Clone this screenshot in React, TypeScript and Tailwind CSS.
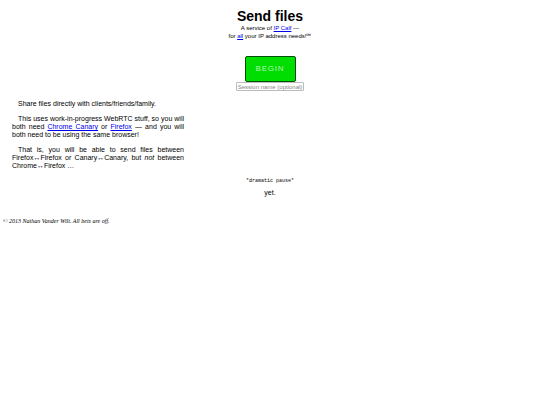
import type { ReactNode } from 'react';

function Link({ children }: { children: ReactNode }) {
  return (
    <a href="#" className="text-[#0000ee] underline">
      {children}
    </a>
  );
}

export default function App() {
  return (
    <div className="bg-white text-black text-[7px] leading-[8px] font-['Liberation_Sans',Arial,sans-serif]">
      <header className="pt-2 text-center">
        <h1 className="text-[14px] leading-[16px] font-bold">Send files</h1>
        <p className="text-[6px] leading-[8px]">
          A service of <Link>IP Calf</Link> —<br />
          for <Link>all</Link> your IP address needs!℠
        </p>
      </header>
      <main>
        <form className="mt-4 flex flex-col items-center" onSubmit={(e) => e.preventDefault()}>
          <button
            type="submit"
            className="h-[26px] w-[51px] rounded-xs border border-[#064d06] bg-[#00dd00] text-[8px] leading-[8px] tracking-widest text-[#b5f5b5]"
          >
            BEGIN
          </button>
          <input
            type="text"
            aria-label="Session name"
            placeholder="Session name (optional)"
            className="h-[9px] w-[68px] rounded-[1px] border border-[#bbbbbb] bg-white text-center text-[6px] leading-[7px] placeholder:text-[#858585]"
          />
        </form>
        <div className="mt-[9px] ml-3 flex w-[172px] flex-col gap-[7px] text-justify indent-[6px]">
          <p>Share files directly with clients/friends/family.</p>
          <p>
            This uses work-in-progress WebRTC stuff, so you will both need <Link>Chrome Canary</Link> or{' '}
            <Link>Firefox</Link> — and you will both need to be using the same browser!
          </p>
          <p>
            That is, you will be able to send files between Firefox↔Firefox or Canary↔Canary, but <em>not</em>{' '}
            between Chrome↔Firefox …
          </p>
        </div>
        <div className="mt-[7px] text-center">
          <p className="font-['Liberation_Mono',monospace] text-[5px] leading-[8px]">*dramatic pause*</p>
          <p className="mt-1">yet.</p>
        </div>
      </main>
      <footer className="mt-5 pl-[3px] font-['Liberation_Serif',serif] text-[6px] leading-[8px] italic">
        © 2013 Nathan Vander Wilt. All bets are off.
      </footer>
    </div>
  );
}
